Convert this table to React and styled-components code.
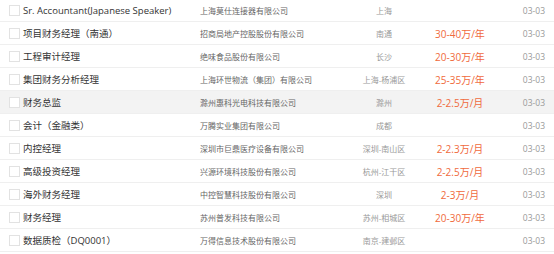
import styled, { createGlobalStyle } from "styled-components";

const GlobalStyle = createGlobalStyle`
  html, body {
    margin: 0;
    padding: 0;
    background: #fff;
  }
  body {
    font-family: "Open Sans", "Noto Sans CJK SC", sans-serif;
    overflow: hidden;
  }
`;

const List = styled.div`
  width: 554px;
  margin-top: -1px;
`;

const Row = styled.div`
  display: grid;
  grid-template-columns: 191px 136px 96px 56px 57px;
  align-items: center;
  height: 22px;
  padding-left: 9px;
  border-bottom: 1px solid #efefef;
  background: ${(p) => (p.active ? "#f3f3f3" : "#fff")};
`;

const TitleCell = styled.div`
  display: flex;
  align-items: center;
  gap: 3px;
  white-space: nowrap;
`;

const Check = styled.span`
  width: 9px;
  height: 9px;
  border: 1px solid #e2e2e2;
  background: #fff;
  flex-shrink: 0;
`;

const Title = styled.span`
  font-size: 9.5px;
  color: #333;
`;

const Company = styled.div`
  font-size: 8px;
  color: #666;
  white-space: nowrap;
`;

const Place = styled.div`
  font-size: 8px;
  color: #999;
  text-align: center;
  white-space: nowrap;
`;

const Salary = styled.div`
  font-size: 10px;
  color: #f06a3c;
  text-align: center;
  white-space: nowrap;
`;

const Date = styled.div`
  font-size: 8.5px;
  color: #999;
  text-align: right;
`;

const jobs = [
  ["Sr. Accountant(Japanese Speaker)", "上海莫仕连接器有限公司", "上海", ""],
  ["项目财务经理（南通）", "招商局地产控股股份有限公司", "南通", "30-40万/年"],
  ["工程审计经理", "绝味食品股份有限公司", "长沙", "20-30万/年"],
  ["集团财务分析经理", "上海环世物流（集团）有限公司", "上海-杨浦区", "25-35万/年"],
  ["财务总监", "滁州惠科光电科技有限公司", "滁州", "2-2.5万/月", true],
  ["会计（金融类）", "万腾实业集团有限公司", "成都", ""],
  ["内控经理", "深圳市巨鼎医疗设备有限公司", "深圳-南山区", "2-2.3万/月"],
  ["高级投资经理", "兴源环境科技股份有限公司", "杭州-江干区", "2-2.5万/月"],
  ["海外财务经理", "中控智慧科技股份有限公司", "深圳", "2-3万/月"],
  ["财务经理", "苏州普发科技有限公司", "苏州-相城区", "20-30万/年"],
  ["数据质检（DQ0001）", "万得信息技术股份有限公司", "南京-建邺区", ""],
];

export default function App() {
  return (
    <>
      <GlobalStyle />
      <List>
        {jobs.map(([title, company, place, salary, active]) => (
          <Row key={title} active={active}>
            <TitleCell>
              <Check />
              <Title>{title}</Title>
            </TitleCell>
            <Company>{company}</Company>
            <Place>{place}</Place>
            <Salary>{salary}</Salary>
            <Date>03-03</Date>
          </Row>
        ))}
      </List>
    </>
  );
}
